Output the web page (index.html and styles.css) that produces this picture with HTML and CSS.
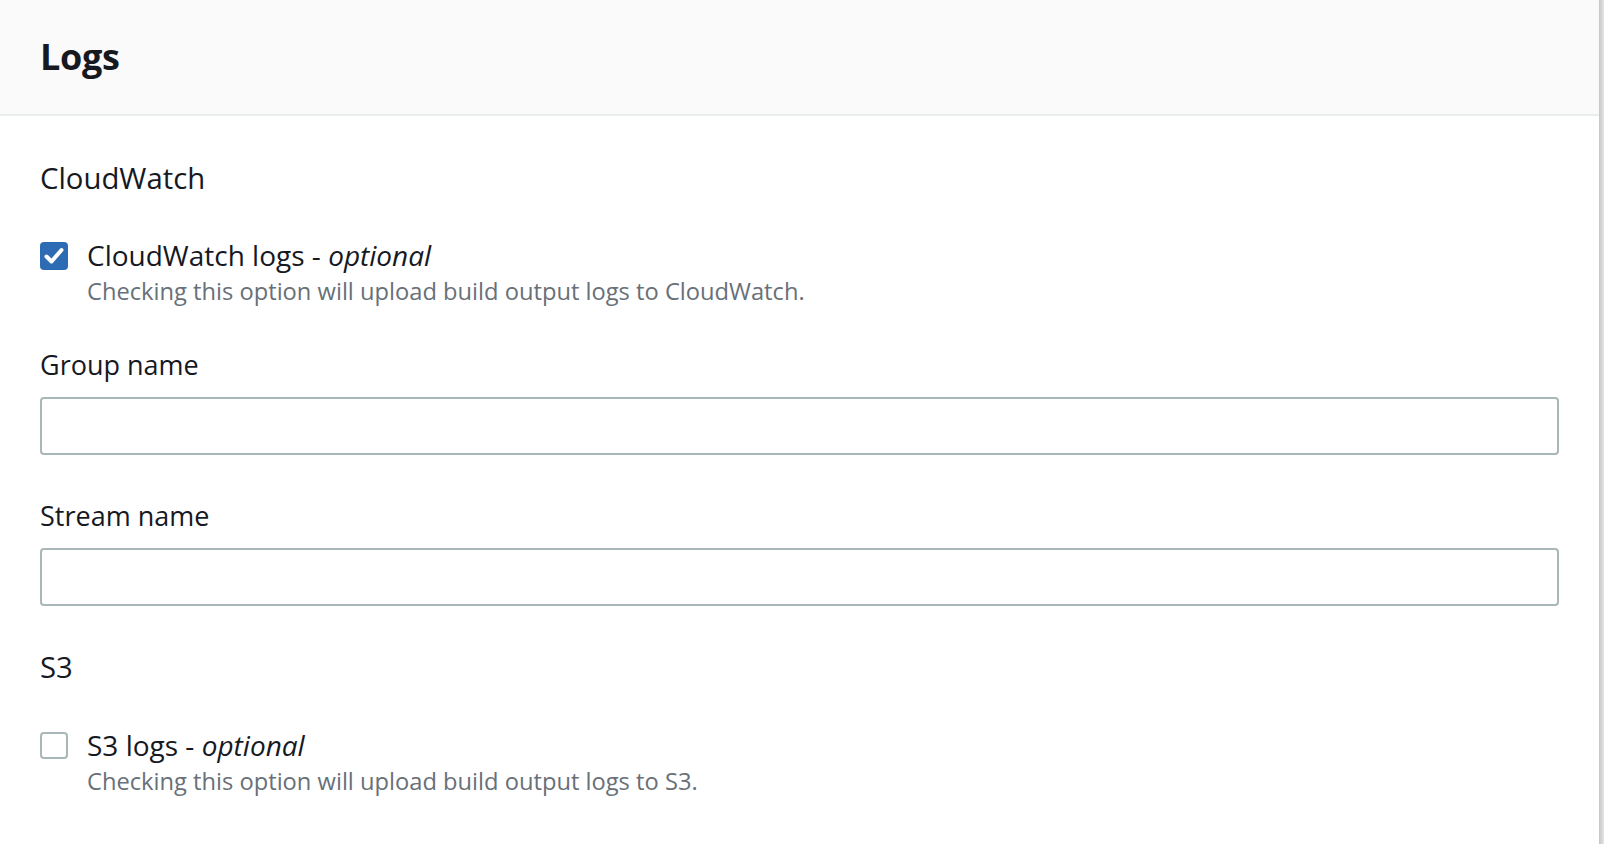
FILE: index.html
```html
<!DOCTYPE html>
<html lang="en">
<head>
<meta charset="utf-8">
<title>Logs</title>
<link rel="stylesheet" href="styles.css">
</head>
<body>
<div class="page">
  <div class="panel">
    <div class="panel-header">
      <h2 class="panel-title">Logs</h2>
    </div>
    <div class="panel-body">
      <h3 class="section-title first">CloudWatch</h3>
      <label class="check-field">
        <span class="checkbox checked">
          <svg viewBox="0 0 28 28" width="28" height="28"><polyline points="6.5,14.5 11.5,19.5 21.5,8" fill="none" stroke="#ffffff" stroke-width="4" stroke-linecap="round" stroke-linejoin="round"/></svg>
        </span>
        <span class="check-text">
          <span class="check-label">CloudWatch logs - <i>optional</i></span>
          <span class="check-desc">Checking this option will upload build output logs to CloudWatch.</span>
        </span>
      </label>
      <div class="form-field first-field">
        <div class="field-label">Group name</div>
        <input class="text-input" type="text">
      </div>
      <div class="form-field">
        <div class="field-label">Stream name</div>
        <input class="text-input" type="text">
      </div>
      <h3 class="section-title">S3</h3>
      <label class="check-field last-check">
        <span class="checkbox"></span>
        <span class="check-text">
          <span class="check-label">S3 logs - <i>optional</i></span>
          <span class="check-desc">Checking this option will upload build output logs to S3.</span>
        </span>
      </label>
    </div>
  </div>
  <div class="edge"></div>
</div>
</body>
</html>
```
FILE: styles.css
```css
html, body {
  margin: 0;
  padding: 0;
  background: #ffffff;
}
body {
  font-family: "Open Sans", "Noto Sans", sans-serif;
  color: #16191f;
}
.page {
  display: flex;
  min-height: 844px;
}
.panel {
  flex: 1;
  background: #ffffff;
}
.edge {
  width: 5px;
  background: linear-gradient(to right, #c3c6c9, #e4e5e6);
}
.panel-header {
  background: #fafafa;
  border-bottom: 2px solid #eaeded;
  padding: 37px 40px 37px 40px;
}
.panel-title {
  margin: 0;
  font-size: 36px;
  line-height: 40px;
  font-weight: 700;
  letter-spacing: -0.3px;
}
.panel-body {
  padding: 0 40px;
}
.section-title {
  margin: 0;
  font-size: 29.3px;
  line-height: 36px;
  font-weight: 400;
}
.section-title.first {
  margin-top: 44px;
}
.check-field {
  display: flex;
  gap: 19px;
  margin-top: 41px;
}
.check-field.last-check {
  margin-top: 42px;
}
.checkbox {
  flex: none;
  width: 28px;
  height: 27px;
  margin-top: 5px;
  box-sizing: border-box;
  border: 2px solid #aab7b8;
  border-radius: 4px;
  background: #ffffff;
}
.checkbox.checked {
  border: none;
  background: #2d6cb4;
  height: 28px;
}
.checkbox svg {
  display: block;
}
.check-text {
  display: flex;
  flex-direction: column;
}
.check-label {
  font-size: 28px;
  line-height: 36px;
}
.check-desc {
  font-size: 23.7px;
  line-height: 36px;
  color: #687078;
}
.form-field {
  margin-top: 43px;
}
.form-field.first-field {
  margin-top: 38px;
}
.field-label {
  font-size: 27px;
  line-height: 36px;
}
.text-input {
  display: block;
  width: 100%;
  height: 58px;
  margin-top: 14px;
  box-sizing: border-box;
  border: 2px solid #aab7b8;
  border-radius: 4px;
  background: #ffffff;
  font: inherit;
  outline: none;
}
.form-field + .section-title {
  margin-top: 43px;
}
```
